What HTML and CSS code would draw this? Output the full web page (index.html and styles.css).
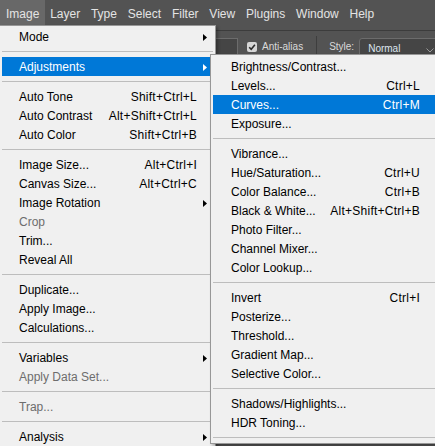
FILE: index.html
```html
<!DOCTYPE html>
<html>
<head>
<meta charset="utf-8">
<link rel="stylesheet" href="styles.css">
</head>
<body>
<div class="app">
  <div class="menubar">
    <span class="mb-item open">Image</span>
    <span class="mb-item">Layer</span>
    <span class="mb-item">Type</span>
    <span class="mb-item">Select</span>
    <span class="mb-item">Filter</span>
    <span class="mb-item">View</span>
    <span class="mb-item">Plugins</span>
    <span class="mb-item">Window</span>
    <span class="mb-item">Help</span>
  </div>
  <div class="options">
    <div class="field"></div>
    <div class="check"><svg width="10" height="10" viewBox="0 0 10 10"><path d="M2.2 5.2 L4.2 7.2 L7.9 2.8" fill="none" stroke="#2b2b2b" stroke-width="1.6"/></svg></div>
    <span class="opt-label">Anti-alias</span>
    <div class="vsep"></div>
    <span class="opt-label style-label">Style:</span>
    <div class="dropdown"><span>Normal</span><svg class="chev" width="8" height="5" viewBox="0 0 8 5"><path d="M0.5 0.5 L4 4 L7.5 0.5" fill="none" stroke="#9a9a9a" stroke-width="1"/></svg></div>
  </div>

  <div class="menu main">
    <div class="item"><span class="label">Mode</span><span class="arrow"><svg width="4" height="7" viewBox="0 0 4 7"><path d="M0 0L4 3.5L0 7Z"/></svg></span></div>
    <div class="sep"></div>
    <div class="item active"><span class="label">Adjustments</span><span class="arrow"><svg width="4" height="7" viewBox="0 0 4 7"><path d="M0 0L4 3.5L0 7Z"/></svg></span></div>
    <div class="sep"></div>
    <div class="item"><span class="label">Auto Tone</span><span class="key">Shift+Ctrl+L</span><span class="arrow"></span></div>
    <div class="item"><span class="label">Auto Contrast</span><span class="key">Alt+Shift+Ctrl+L</span><span class="arrow"></span></div>
    <div class="item"><span class="label">Auto Color</span><span class="key">Shift+Ctrl+B</span><span class="arrow"></span></div>
    <div class="sep"></div>
    <div class="item"><span class="label">Image Size...</span><span class="key">Alt+Ctrl+I</span><span class="arrow"></span></div>
    <div class="item"><span class="label">Canvas Size...</span><span class="key">Alt+Ctrl+C</span><span class="arrow"></span></div>
    <div class="item"><span class="label">Image Rotation</span><span class="arrow"><svg width="4" height="7" viewBox="0 0 4 7"><path d="M0 0L4 3.5L0 7Z"/></svg></span></div>
    <div class="item disabled"><span class="label">Crop</span><span class="arrow"></span></div>
    <div class="item"><span class="label">Trim...</span><span class="arrow"></span></div>
    <div class="item"><span class="label">Reveal All</span><span class="arrow"></span></div>
    <div class="sep"></div>
    <div class="item"><span class="label">Duplicate...</span><span class="arrow"></span></div>
    <div class="item"><span class="label">Apply Image...</span><span class="arrow"></span></div>
    <div class="item"><span class="label">Calculations...</span><span class="arrow"></span></div>
    <div class="sep"></div>
    <div class="item"><span class="label">Variables</span><span class="arrow"><svg width="4" height="7" viewBox="0 0 4 7"><path d="M0 0L4 3.5L0 7Z"/></svg></span></div>
    <div class="item disabled"><span class="label">Apply Data Set...</span><span class="arrow"></span></div>
    <div class="sep"></div>
    <div class="item disabled"><span class="label">Trap...</span><span class="arrow"></span></div>
    <div class="sep"></div>
    <div class="item"><span class="label">Analysis</span><span class="arrow"><svg width="4" height="7" viewBox="0 0 4 7"><path d="M0 0L4 3.5L0 7Z"/></svg></span></div>
  </div>

  <div class="menu sub">
    <div class="item"><span class="label">Brightness/Contrast...</span><span class="arrow"></span></div>
    <div class="item"><span class="label">Levels...</span><span class="key">Ctrl+L</span><span class="arrow"></span></div>
    <div class="item active"><span class="label">Curves...</span><span class="key">Ctrl+M</span><span class="arrow"></span></div>
    <div class="item"><span class="label">Exposure...</span><span class="arrow"></span></div>
    <div class="sep"></div>
    <div class="item"><span class="label">Vibrance...</span><span class="arrow"></span></div>
    <div class="item"><span class="label">Hue/Saturation...</span><span class="key">Ctrl+U</span><span class="arrow"></span></div>
    <div class="item"><span class="label">Color Balance...</span><span class="key">Ctrl+B</span><span class="arrow"></span></div>
    <div class="item"><span class="label">Black &amp; White...</span><span class="key">Alt+Shift+Ctrl+B</span><span class="arrow"></span></div>
    <div class="item"><span class="label">Photo Filter...</span><span class="arrow"></span></div>
    <div class="item"><span class="label">Channel Mixer...</span><span class="arrow"></span></div>
    <div class="item"><span class="label">Color Lookup...</span><span class="arrow"></span></div>
    <div class="sep"></div>
    <div class="item"><span class="label">Invert</span><span class="key">Ctrl+I</span><span class="arrow"></span></div>
    <div class="item"><span class="label">Posterize...</span><span class="arrow"></span></div>
    <div class="item"><span class="label">Threshold...</span><span class="arrow"></span></div>
    <div class="item"><span class="label">Gradient Map...</span><span class="arrow"></span></div>
    <div class="item"><span class="label">Selective Color...</span><span class="arrow"></span></div>
    <div class="sep"></div>
    <div class="item"><span class="label">Shadows/Highlights...</span><span class="arrow"></span></div>
    <div class="item"><span class="label">HDR Toning...</span><span class="arrow"></span></div>
    <div class="sep"></div>
  </div>
</div>
</body>
</html>
```

FILE: styles.css
```css
html, body {
  margin: 0;
  padding: 0;
  background: #535353;
}

.app {
  position: relative;
  width: 435px;
  height: 446px;
  overflow: hidden;
  background: #535353;
  font-family: "Liberation Sans", Arial, sans-serif;
}

.menubar {
  display: flex;
  align-items: flex-start;
  height: 30px;
  background: #535353;
}

.mb-item {
  flex-shrink: 0;
  box-sizing: border-box;
  padding: 3px 5.4px 0 5.4px;
  height: 25px;
  line-height: 22px;
  font-size: 12px;
  color: #e4e4e4;
  white-space: nowrap;
}

.mb-item.open {
  padding-left: 6px;
  background: #686868;
}

.options {
  display: flex;
  align-items: flex-start;
  height: 60px;
  border-top: 1px solid #3c3c3c;
  padding-left: 178px;
  background: #535353;
}

.options > * {
  flex-shrink: 0;
}

.field {
  width: 58px;
  height: 22px;
  margin-top: 7px;
  background: #454545;
  border: 1px solid #6c6c6c;
}

.check {
  width: 10px;
  height: 10px;
  margin-left: 9px;
  margin-top: 11px;
  background: #d6d6d6;
  border-radius: 2px;
  display: flex;
}

.opt-label {
  margin-left: 5px;
  margin-top: 10px;
  font-size: 10px;
  line-height: 12px;
  color: #dadada;
  white-space: nowrap;
}

.vsep {
  width: 1px;
  height: 30px;
  margin-left: 13px;
  margin-top: 5px;
  background: #3e3e3e;
}

.style-label {
  margin-left: 12px;
}

.dropdown {
  display: flex;
  align-items: flex-start;
  margin-left: 5px;
  margin-top: 7px;
  width: 90px;
  height: 22px;
  box-sizing: border-box;
  padding: 4px 0 0 8px;
  background: #454545;
  border: 1px solid #6c6c6c;
  border-radius: 3px;
  font-size: 10px;
  line-height: 12px;
  color: #dde6ef;
}

.chev {
  margin-left: 26px;
  margin-top: 5px;
  flex-shrink: 0;
}

.menu {
  position: absolute;
  background: #f0f0f0;
  border: 1px solid #979797;
  font-size: 12px;
  color: #000;
  box-shadow: 2px 2px 3px rgba(0, 0, 0, 0.3);
}

.main {
  left: -1px;
  top: 25px;
  width: 211px;
  padding: 1px 2px 0 2px;
  z-index: 1;
}

.sub {
  left: 210px;
  top: 54px;
  width: 223px;
  padding: 2px 2px 0 2px;
  z-index: 2;
}

.item {
  display: flex;
  align-items: flex-start;
  box-sizing: border-box;
  height: 19px;
  padding-top: 2px;
  line-height: 17px;
  padding-left: 17px;
  white-space: nowrap;
}

.sub .item {
  padding-left: 18px;
}

.item .label {
  flex: 1;
}

.item .key {
  letter-spacing: 0.25px;
}

.item .arrow {
  width: 16px;
  height: 17px;
  display: flex;
  align-items: center;
  flex-shrink: 0;
}

.item .arrow svg {
  margin-left: 6px;
  margin-top: -1px;
  fill: #000;
}

.item.active {
  background: #0078d7;
  color: #fff;
}

.item.active .arrow svg {
  fill: #fff;
}

.item.disabled {
  color: #6d6d6d;
}

.sep {
  height: 5px;
  border-bottom: 1px solid #bdbdbd;
  margin-bottom: 5px;
}
```
